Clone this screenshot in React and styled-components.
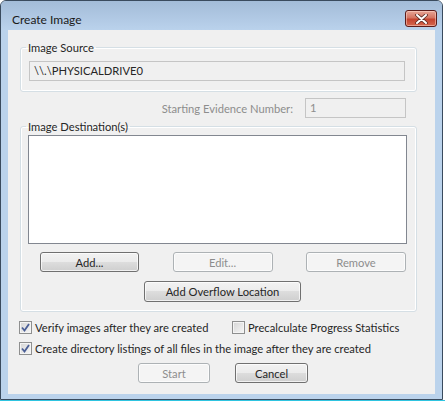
import React from 'react'
import styled, { createGlobalStyle } from 'styled-components'

const GlobalStyle = createGlobalStyle`
    body {
        margin: 0;
        background: #ffffff;
        font-family: Lato, "Noto Sans", sans-serif;
        font-size: 11.2px;
        -webkit-font-smoothing: none;
    }
`

const Screen = styled.div`
    width: 445px;
    height: 403px;
    overflow: hidden;
    background: #ffffff;
`

const Window = styled.div`
    width: 441px;
    height: 398px;
    border: 1px solid #3a4b5e;
    border-radius: 6px 6px 0 0;
    background: #bbd3ec;
    display: flex;
    flex-direction: column;
`

const BehindEdge = styled.div`
    height: 1px;
    background: #2fc4e0;
`

const TitleBar = styled.div`
    height: 29px;
    box-sizing: border-box;
    display: flex;
    align-items: flex-start;
    justify-content: space-between;
    padding: 9px 5px 0 11px;
    background: linear-gradient(#a3bcd8, #b3cbe6 70%, #bad2ec);
    border-radius: 5px 5px 0 0;
`

const Title = styled.span`
    color: #1a1a1a;
    font-size: 12px;
    line-height: 16px;
    margin-top: 2px;
`

const CloseButton = styled.div`
    width: 30px;
    height: 15px;
    border: 1px solid #5b1c1a;
    border-radius: 3px;
    background: linear-gradient(#e7a596, #d47462 45%, #c4432f 55%, #d5684f);
    display: flex;
    align-items: center;
    justify-content: center;
    box-shadow: inset 0 0 0 1px rgba(255, 220, 210, 0.5);
`

const Client = styled.div`
    margin: 0 7px;
    height: 364px;
    background: #f0f0f0;
    padding: 10px 18px 0 12px;
    box-sizing: border-box;
    display: flex;
    flex-direction: column;
    color: #262626;
`

const Group = styled.fieldset`
    margin: 0;
    padding: 0 0 ${p => p.$bottom}px;
    border: 1px solid #d5dfe5;
    border-radius: 3px;
    box-shadow: inset 0 0 0 1px #ffffff;
    display: flex;
    flex-direction: column;
    min-width: 0;
`

const Legend = styled.legend`
    padding: 0 2px;
    margin-left: 5px;
    line-height: 15px;
`

const TextField = styled.div`
    height: 20px;
    box-sizing: border-box;
    border: 1px solid #c5c5c5;
    background: #f0f0f0;
    color: ${p => (p.$disabled ? '#8d8d8d' : '#262626')};
    padding: 0 4px;
    line-height: 18px;
    width: ${p => p.$width || 'auto'};
    margin: ${p => p.$margin || '0'};
`

const EvidenceRow = styled.div`
    display: flex;
    align-items: center;
    justify-content: flex-end;
    gap: 12px;
    margin: 6px 11px 1px 0;
    color: #8d8d8d;
`

const ListBox = styled.div`
    height: 107px;
    border: 1px solid #828790;
    background: #ffffff;
    margin: 1px 9px 0 7px;
`

const ButtonRow = styled.div`
    display: flex;
    justify-content: space-between;
    margin: 8px 10px 0 19px;
`

const Button = styled.div`
    width: ${p => p.$width}px;
    height: 20px;
    box-sizing: border-box;
    border-radius: 3px;
    display: flex;
    align-items: center;
    justify-content: center;
    border: 1px solid ${p => (p.$disabled ? '#adb2b5' : '#707070')};
    background: ${p =>
        p.$disabled
            ? '#f4f4f4'
            : 'linear-gradient(#f2f2f2, #ebebeb 50%, #dddddd 50%, #cfcfcf)'};
    color: ${p => (p.$disabled ? '#8d8d8d' : '#262626')};
    box-shadow: inset 0 0 0 1px rgba(255, 255, 255, 0.7);
`

const OverflowButton = styled(Button)`
    height: 21px;
    margin: 9px 0 0 123px;
`

const Options = styled.div`
    display: flex;
    flex-direction: column;
    gap: 8px;
    margin: 9px 0 0 -1px;
`

const OptionRow = styled.div`
    display: flex;
`

const Option = styled.label`
    display: flex;
    align-items: center;
    gap: 3px;
    height: 13px;
    width: ${p => (p.$width ? `${p.$width}px` : 'auto')};
    white-space: nowrap;
`

const Box = styled.span`
    width: 13px;
    height: 13px;
    box-sizing: border-box;
    border: 1px solid #8e8f8f;
    background: linear-gradient(135deg, #d5d5d5, #f6f6f6);
    box-shadow: inset 0 0 0 1px #f4f4f4;
    display: flex;
    align-items: center;
    justify-content: center;
    flex-shrink: 0;
`

const Footer = styled.div`
    display: flex;
    gap: 25px;
    margin: 8px 0 0 118px;
`

function CheckBox({ checked, label, width }) {
    return (
        <Option $width={width}>
            <Box>
                {checked && (
                    <svg width="9" height="9" viewBox="0 0 9 9">
                        <path d="M1 4.5 L3.5 7.5 L8 1" fill="none" stroke="#4b5f96" strokeWidth="1.8" />
                    </svg>
                )}
            </Box>
            {label}
        </Option>
    )
}

export default function App() {
    return (
        <Screen>
            <GlobalStyle />
            <Window>
                <TitleBar>
                    <Title>Create Image</Title>
                    <CloseButton>
                        <svg width="13" height="10" viewBox="0 0 13 10">
                            <path d="M2 1 L11 9 M11 1 L2 9" stroke="#5a2a24" strokeWidth="3.6" strokeLinecap="round" />
                            <path d="M2 1 L11 9 M11 1 L2 9" stroke="#ffffff" strokeWidth="2" strokeLinecap="round" />
                        </svg>
                    </CloseButton>
                </TitleBar>
                <Client>
                    <Group $bottom={10}>
                        <Legend>Image Source</Legend>
                        <TextField $margin="6px 11px 0 8px">\\.\PHYSICALDRIVE0</TextField>
                    </Group>
                    <EvidenceRow>
                        Starting Evidence Number:
                        <TextField $width="101px" $disabled>1</TextField>
                    </EvidenceRow>
                    <Group $bottom={9}>
                        <Legend>Image Destination(s)</Legend>
                        <ListBox />
                        <ButtonRow>
                            <Button $width={99}>Add...</Button>
                            <Button $width={100} $disabled>Edit...</Button>
                            <Button $width={100} $disabled>Remove</Button>
                        </ButtonRow>
                        <OverflowButton $width={157}>Add Overflow Location</OverflowButton>
                    </Group>
                    <Options>
                        <OptionRow>
                            <CheckBox checked width={213} label="Verify images after they are created" />
                            <CheckBox label="Precalculate Progress Statistics" />
                        </OptionRow>
                        <CheckBox checked label="Create directory listings of all files in the image after they are created" />
                    </Options>
                    <Footer>
                        <Button $width={72} $disabled>Start</Button>
                        <Button $width={73}>Cancel</Button>
                    </Footer>
                </Client>
            </Window>
            <BehindEdge />
        </Screen>
    )
}
